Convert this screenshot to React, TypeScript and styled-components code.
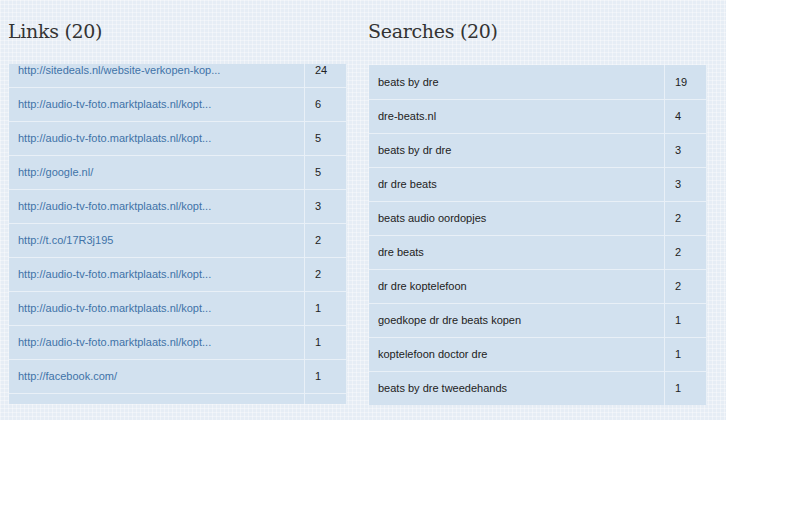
import React from "react";
import styled, { createGlobalStyle } from "styled-components";

const G = createGlobalStyle`body{margin:0;background:#fff;font-family:"Liberation Sans",Arial,sans-serif;}`;
const Page = styled.div`
  width:726px;height:420px;display:flex;gap:21px;padding:0 0 0 8px;box-sizing:border-box;
  background-color:#e6edf5;
  background-image:linear-gradient(rgba(255,255,255,.35) 1px,transparent 1px),linear-gradient(90deg,rgba(255,255,255,.35) 1px,transparent 1px);
  background-size:4px 4px;
`;
const Col = styled.div<{ w: number }>`width:${p => p.w}px;display:flex;flex-direction:column;`;
const H = styled.h2`margin:20px 0 0 0;height:44px;font:400 19px "DejaVu Serif",Georgia,serif;color:#333;letter-spacing:-0.3px;`;
const Clip = styled.div<{ top: number }>`height:340px;overflow:hidden;margin-left:1px;margin-top:${p => p.top}px;`;
const Table = styled.table<{ shift: number }>`border-collapse:collapse;width:100%;margin-top:${p => p.shift}px;`;
const Tr = styled.tr`height:34px;`;
const Td = styled.td<{ num?: boolean }>`
  background:#d2e1ef;border:1px solid #e9f0f7;border-top:none;border-left:none;
  font-size:11px;color:#222;padding:0 0 0 ${p => (p.num ? 10 : 9)}px;
  width:${p => (p.num ? "31px" : "auto")};vertical-align:middle;
`;
const A = styled.span`color:#3f73a8;`;

const links: [string, number][] = [
  ["http://sitedeals.nl/website-verkopen-kop...", 24],
  ["http://audio-tv-foto.marktplaats.nl/kopt...", 6],
  ["http://audio-tv-foto.marktplaats.nl/kopt...", 5],
  ["http://google.nl/", 5],
  ["http://audio-tv-foto.marktplaats.nl/kopt...", 3],
  ["http://t.co/17R3j195", 2],
  ["http://audio-tv-foto.marktplaats.nl/kopt...", 2],
  ["http://audio-tv-foto.marktplaats.nl/kopt...", 1],
  ["http://audio-tv-foto.marktplaats.nl/kopt...", 1],
  ["http://facebook.com/", 1],
  ["", 0],
];
const searches: [string, number][] = [
  ["beats by dre", 19], ["dre-beats.nl", 4], ["beats by dr dre", 3], ["dr dre beats", 3],
  ["beats audio oordopjes", 2], ["dre beats", 2], ["dr dre koptelefoon", 2],
  ["goedkope dr dre beats kopen", 1], ["koptelefoon doctor dre", 1], ["beats by dre tweedehands", 1],
];

export default function App() {
  return (
    <>
      <G />
      <Page>
        <Col w={339}>
          <H>Links (20)</H>
          <Clip top={0}>
            <Table shift={-11}>
              <tbody>
                {links.map((l, i) => (
                  <Tr key={i}><Td><A>{l[0]}</A></Td><Td num>{l[0] ? l[1] : ""}</Td></Tr>
                ))}
              </tbody>
            </Table>
          </Clip>
        </Col>
        <Col w={339}>
          <H>Searches (20)</H>
          <Clip top={1}>
            <Table shift={0}>
              <tbody>
                {searches.map((s, i) => (
                  <Tr key={i}><Td>{s[0]}</Td><Td num>{s[1]}</Td></Tr>
                ))}
              </tbody>
            </Table>
          </Clip>
        </Col>
      </Page>
    </>
  );
}
